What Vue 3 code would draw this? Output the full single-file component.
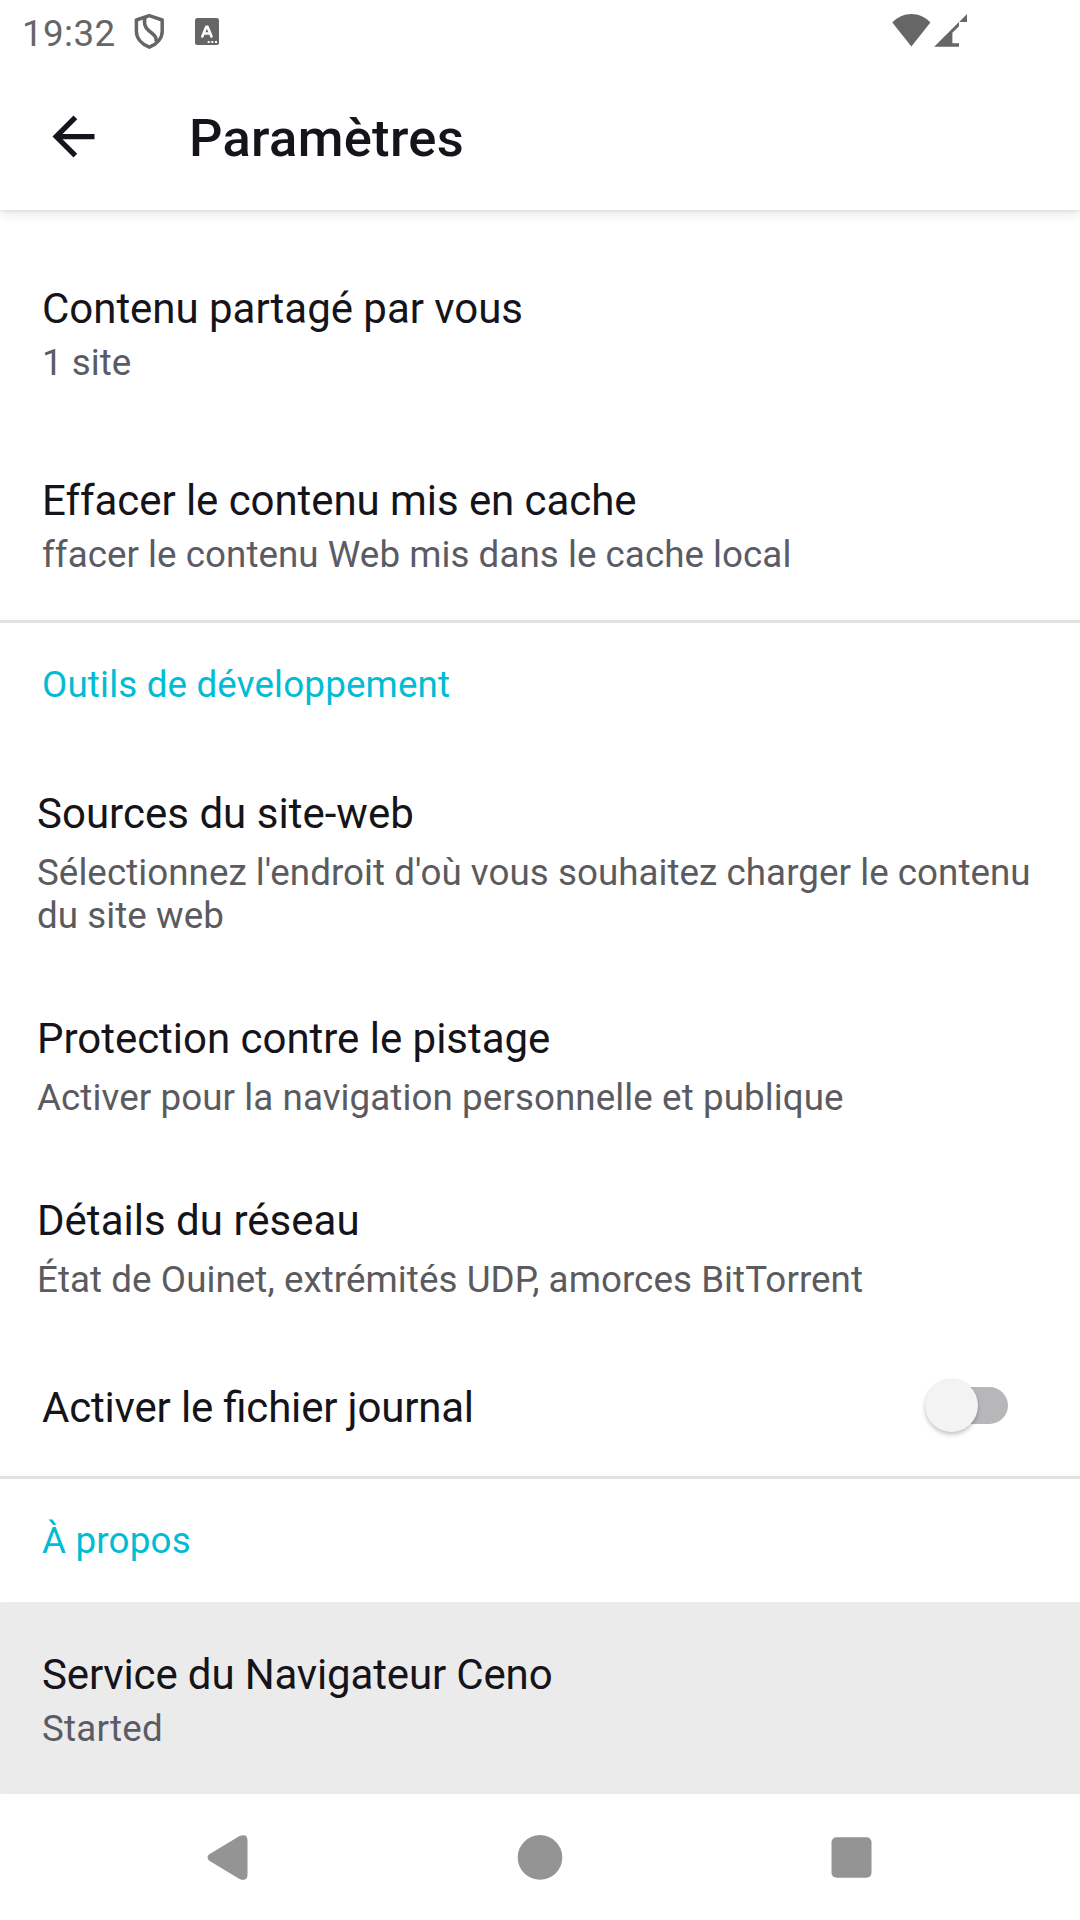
<script setup>
const sharing = [
  { title: 'Contenu partagé par vous', summary: '1 site', track: -0.03, subTrack: 0 },
  { title: 'Effacer le contenu mis en cache', summary: 'ffacer le contenu Web mis dans le cache local', track: -0.065, subTrack: 0.04 },
]
const developer = [
  { title: 'Sources du site-web', summary: "Sélectionnez l'endroit d'où vous souhaitez charger le contenu du site web", track: 0.02, subTrack: 0.043 },
  { title: 'Protection contre le pistage', summary: 'Activer pour la navigation personnelle et publique', track: -0.025, subTrack: 0.078 },
  { title: 'Détails du réseau', summary: 'État de Ouinet, extrémités UDP, amorces BitTorrent', track: 0.02, subTrack: 0.057 },
]
</script>

<template>
  <div class="screen">
    <header class="top">
      <div class="status">
        <span class="clock">19:32</span>
        <svg class="shield" width="32" height="37" viewBox="0 0 32 37">
          <path d="M16.300 2.700 29.200 7v11.500c0 6.500-5 12.500-12.900 15.700C8.400 31 3.400 25 3.400 18.500V7z" fill="none" stroke="#666" stroke-width="3.500" stroke-linejoin="round" />
          <path d="M12 4.500C10.500 10 11.300 14 15.800 17.700c5 4 8.200 6 7.400 11" fill="none" stroke="#666" stroke-width="3.600" />
        </svg>
        <svg class="abox" width="24" height="27" viewBox="0 0 24 27">
          <rect width="24" height="27" rx="2.500" fill="#666" />
          <path d="M7.300 18.500 11.300 8.800h1.200l4 9.700M9 15.500h6" fill="none" stroke="#fff" stroke-width="2.600" stroke-linecap="round" stroke-linejoin="round" />
          <path d="M12.700 23h2v2h-2zM16.300 23h2v2h-2zM20 23h2v2h-2z" fill="#fff" />
        </svg>
        <svg class="radio" width="76" height="34" viewBox="0 0 76 34">
          <path d="M.3 9.500C5.500 4 12 1 19.400 1s13.800 3 19 8.500L19.400 33.500z" fill="#666" />
          <path d="M42.200 33.700 67 8.900v4.300l-6.600 6.600v10.500H67v3.400zM67.200 9 75 1v8z" fill="#666" />
        </svg>
      </div>
      <div class="appbar">
        <svg class="back" width="63" height="63" viewBox="0 0 24 24" fill="#15141a">
          <path d="M20 11H7.830l5.590-5.590L12 4l-8 8 8 8 1.410-1.410L7.830 13H20z" />
        </svg>
        <h1>Paramètres</h1>
      </div>
    </header>

    <main>
      <section class="group first">
        <div v-for="r in sharing" :key="r.title" class="row">
          <div class="title" :style="{ letterSpacing: r.track + 'px' }">{{ r.title }}</div>
          <div class="summary" :style="{ letterSpacing: r.subTrack + 'px' }">{{ r.summary }}</div>
        </div>
      </section>

      <section class="group">
        <h2 class="dev">Outils de développement</h2>
        <div v-for="r in developer" :key="r.title" class="row wide">
          <div class="title" :style="{ letterSpacing: r.track + 'px' }">{{ r.title }}</div>
          <div class="summary" :style="{ letterSpacing: r.subTrack + 'px' }">{{ r.summary }}</div>
        </div>
        <div class="row toggle">
          <div class="title">Activer le fichier journal</div>
          <div class="switch"><div class="thumb"></div></div>
        </div>
      </section>

      <section class="group">
        <h2>À propos</h2>
        <div class="row pressed">
          <div class="title">Service du Navigateur Ceno</div>
          <div class="summary">Started</div>
        </div>
      </section>
    </main>

    <nav>
      <svg width="41" height="46" viewBox="0 0 41 46">
        <path d="M2.300 20.300 32.500 2Q40.500-1 40.500 6.500v34q0 7.500-8 4.500L2.300 26.700q-3.600-3.200 0-6.400z" fill="#949494" />
      </svg>
      <svg class="home" width="46" height="46" viewBox="0 0 46 46"><circle cx="23" cy="23.400" r="22.300" fill="#949494" /></svg>
      <svg width="41" height="42" viewBox="0 0 41 42"><rect x=".5" y="1.300" width="40" height="40.400" rx="5" fill="#949494" /></svg>
    </nav>
  </div>
</template>

<style>
body { margin: 0; background: #fff; }
</style>

<style scoped>
.screen {
  width: 1080px;
  height: 1920px;
  display: flex;
  flex-direction: column;
  overflow: hidden;
  background: #fff;
  font-family: Roboto, sans-serif;
  color: #15141a;
}
.top {
  height: 210px;
  flex: none;
  background: #fff;
  box-shadow: 0 1px 3px rgba(0, 0, 0, 0.08), 0 4px 12px rgba(0, 0, 0, 0.1);
}
.status {
  height: 63px;
  display: flex;
  align-items: flex-start;
  padding-left: 22px;
  box-sizing: border-box;
}
.clock {
  width: 111px;
  margin-top: 12px;
  font-size: 36.75px;
  line-height: 43px;
  letter-spacing: 0.4px;
  color: #666;
}
.shield { margin-top: 13px; }
.abox { margin: 18px 0 0 30px; }
.radio { margin: 13px 0 0 673px; }
.appbar {
  height: 147px;
  display: flex;
  align-items: flex-start;
}
.back { margin: 42px 0 0 42px; }
h1 {
  margin: 44px 0 0 84px;
  font-size: 52.5px;
  line-height: 62px;
  font-weight: 500;
  letter-spacing: 0.3px;
}
.group + .group { border-top: 3px solid #e1e1e1; }
.first { padding-top: 26px; }
h2 {
  margin: 0;
  padding: 40px 42px;
  font-size: 36.75px;
  line-height: 43px;
  font-weight: 400;
  letter-spacing: 0.2px;
  color: #00bcd4;
}
.dev { letter-spacing: 0.16px; }
.row { padding: 48px 42px 44px; }
.title {
  font-size: 42px;
  line-height: 49px;
  font-feature-settings: 'liga' 1;
}
.summary {
  margin-top: 8px;
  font-size: 36.75px;
  line-height: 43px;
  color: #5b5b66;
}
.wide { padding: 43px 20px 34px 37px; }
.wide .summary { margin-top: 13px; color: #5b5b5f; }
.toggle {
  display: flex;
  justify-content: space-between;
  align-items: flex-start;
  padding-right: 72px;
}
.toggle .title { letter-spacing: -0.18px; }
.switch {
  width: 76px;
  height: 37px;
  margin-top: 4px;
  border-radius: 19px;
  background: #b7b7b9;
}
.thumb {
  width: 53px;
  height: 53px;
  margin: -8px 0 0 -7px;
  border-radius: 50%;
  background: #f3f3f3;
  box-shadow: 0 3px 4px rgba(0, 0, 0, 0.2), 0 0 2px rgba(0, 0, 0, 0.1);
}
.pressed { background: #ebebeb; border-radius: 2px 0 0 2px; }
.pressed .title { letter-spacing: -0.15px; }
.pressed .summary { letter-spacing: 0.2px; }
.home { margin-left: 1px; }
nav {
  height: 126px;
  box-sizing: border-box;
  display: flex;
  align-items: center;
  justify-content: space-between;
  padding: 0 208px 0 207px;
}
</style>
